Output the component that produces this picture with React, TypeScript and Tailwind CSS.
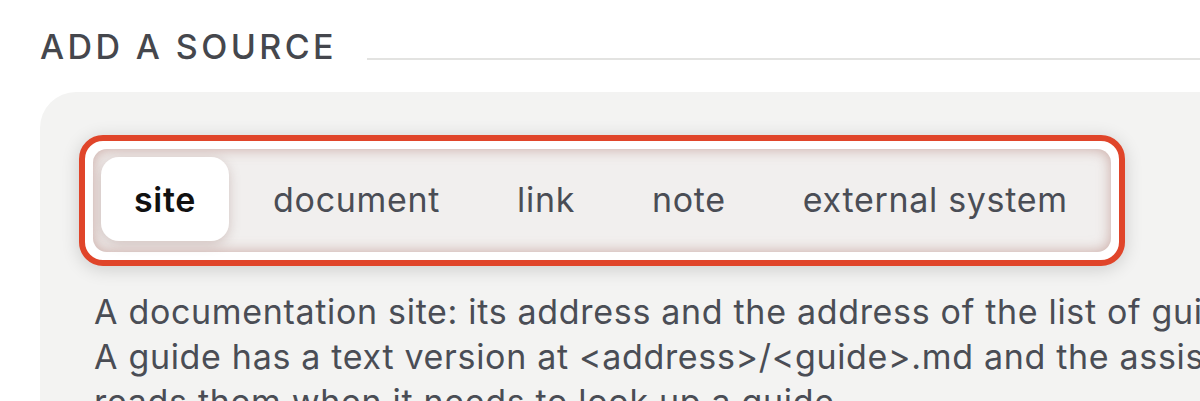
import React from "react";

const tabs = ["site", "document", "link", "note", "external system"];

export default function App() {
  return (
    <div
      className="w-[1200px] h-[401px] overflow-hidden bg-white"
      style={{ fontFamily: "Inter, 'Noto Sans', sans-serif" }}
    >
      <div className="flex items-center pl-[40px] pt-[27px]">
        <div className="text-[34px] leading-[40px] tracking-[0.1em] text-[#45474d] font-medium whitespace-nowrap">
          ADD A SOURCE
        </div>
        <div className="flex-1 h-[2px] bg-[#e3e3e1] ml-[30px] mt-[23px]" />
      </div>
      <div className="ml-[40px] mt-[25px] w-[1200px] h-[400px] bg-[#f3f3f2] rounded-tl-[36px] pl-[39px] pt-[43px]">
        <div className="inline-flex rounded-[24px] border-[6px] border-[#e0452a] bg-white p-[8px] shadow-[0_3px_18px_rgba(0,0,0,0.16)]">
          <div className="flex gap-[11px] rounded-[14px] bg-[#f1efee] p-[8px] pr-[10px] pb-[11px] shadow-[inset_0_0_14px_rgba(175,120,112,0.6)]">
            {tabs.map((t, i) => (
              <div
                key={t}
                className={
                  i === 0
                    ? "h-[84px] px-[33px] flex items-center rounded-[18px] bg-white text-[34px] tracking-[0.02em] text-[#111] font-semibold shadow-[0_3px_12px_rgba(140,95,90,0.3)] whitespace-nowrap"
                    : "h-[84px] px-[33px] flex items-center text-[34px] tracking-[0.02em] text-[#4a4d55] whitespace-nowrap"
                }
              >
                {t}
              </div>
            ))}
          </div>
        </div>
        <div className="mt-[23px] pl-[15px] text-[34px] leading-[45px] tracking-[0.02em] text-[#4a4d55] whitespace-nowrap">
          <div>A documentation site: its address and the address of the list of guides.</div>
          <div>A guide has a text version at &lt;address&gt;/&lt;guide&gt;.md and the assistant</div>
          <div>reads them when it needs to look up a guide.</div>
        </div>
      </div>
    </div>
  );
}
